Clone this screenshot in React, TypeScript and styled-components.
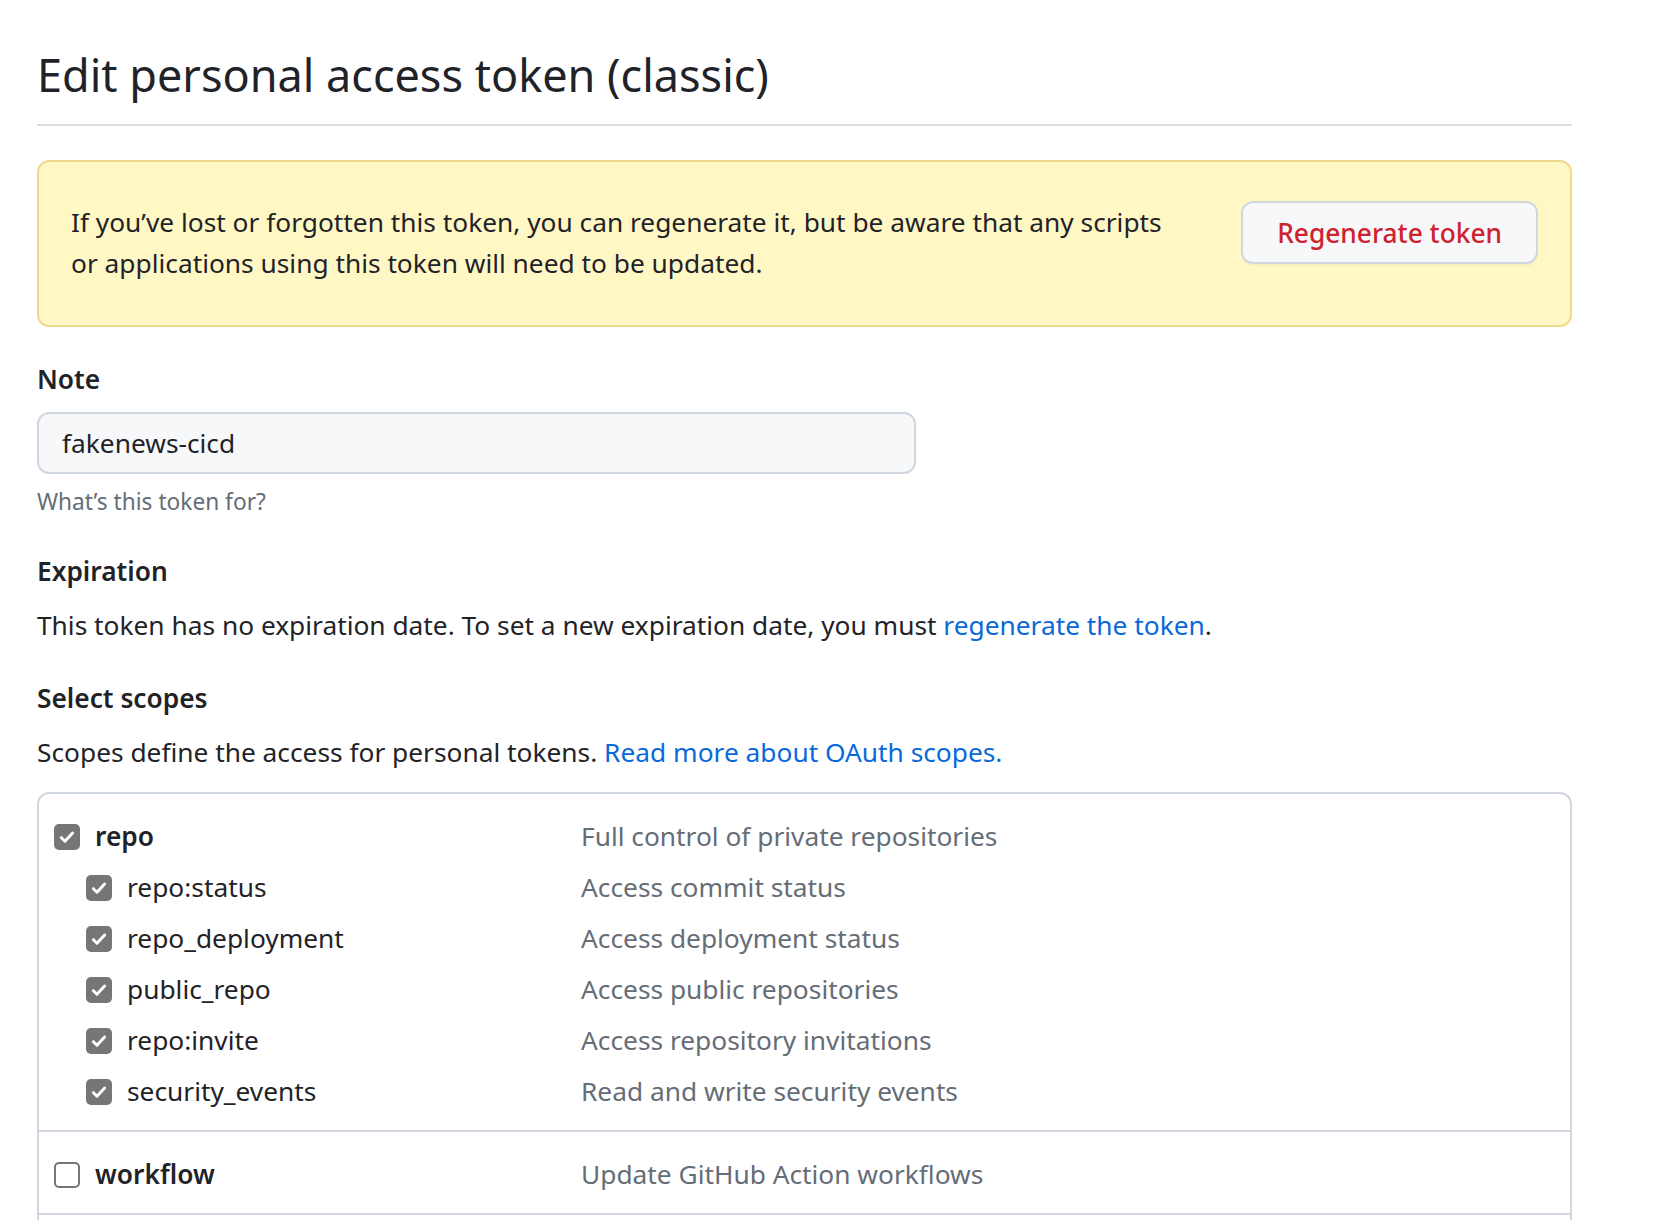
import React from 'react';
import styled, { createGlobalStyle } from 'styled-components';

const GlobalStyle = createGlobalStyle`
    body {
        margin: 0;
        background: #ffffff;
        color: #1f2328;
        font-family: 'Noto Sans', 'Liberation Sans', sans-serif;
        font-size: 26.3px;
        line-height: 41px;
    }
`;

const Page = styled.div`
    width: 1535px;
    padding: 39px 0 0 37px;
`;

const Subhead = styled.h1`
    margin: 0;
    padding-bottom: 13px;
    border-bottom: 2px solid #d8dee4;
    font-size: 45px;
    font-weight: 400;
    line-height: 72px;
`;

const Flash = styled.div`
    display: flex;
    align-items: flex-start;
    justify-content: space-between;
    margin-top: 34px;
    padding: 40px 32px 41px;
    background: #fff8c5;
    border: 2px solid #efd98b;
    border-radius: 12px;
`;

const FlashText = styled.p`
    margin: 0;
    width: 1104px;
`;

const Button = styled.button`
    margin-top: -1px;
    height: 63px;
    padding: 0 34px;
    background: #f6f8fa;
    border: 2px solid #d0d7de;
    border-radius: 12px;
    box-shadow: 0 2px 0 rgba(31, 35, 40, 0.04);
    color: #cf222e;
    font-family: inherit;
    font-size: 26.3px;
    font-weight: 500;
    cursor: pointer;
`;

const Label = styled.div<{ $gap?: number }>`
    margin-top: ${p => p.$gap ?? 30}px;
    font-weight: 600;
`;

const Input = styled.input`
    display: block;
    box-sizing: border-box;
    margin-top: 12px;
    width: 879px;
    height: 62px;
    padding: 0 23px;
    background: #f6f8fa;
    border: 2px solid #d0d7de;
    border-radius: 12px;
    color: #1f2328;
    font-family: inherit;
    font-size: 26.3px;
`;

const Note = styled.div`
    margin-top: 10px;
    color: #656d76;
    font-size: 22.7px;
    line-height: 36px;
`;

const Text = styled.p`
    margin: 13px 0 0;
`;

const Link = styled.a`
    color: #0969da;
    text-decoration: none;
`;

const ScopeBox = styled.div`
    margin-top: 19px;
    border: 2px solid #d0d7de;
    border-bottom: none;
    border-radius: 12px 12px 0 0;
`;

const ScopeGroup = styled.div`
    padding: 17px 0 13px 15px;
    border-bottom: 2px solid #d0d7de;
`;

const ScopeRow = styled.div<{ $child?: boolean }>`
    display: grid;
    grid-template-columns: ${p => (p.$child ? '495px' : '527px')} 1fr;
    align-items: center;
    height: 51px;
    padding-left: ${p => (p.$child ? 32 : 0)}px;
`;

const ScopeName = styled.label<{ $strong?: boolean }>`
    display: flex;
    align-items: center;
    gap: 15px;
    font-weight: ${p => (p.$strong ? 600 : 400)};
`;

const Box = styled.span<{ $checked?: boolean }>`
    box-sizing: border-box;
    display: inline-flex;
    align-items: center;
    justify-content: center;
    width: 26px;
    height: 26px;
    border-radius: 5px;
    background: ${p => (p.$checked ? '#767676' : '#ffffff')};
    border: ${p => (p.$checked ? 'none' : '2px solid #767676')};
`;

const ScopeDesc = styled.span`
    color: #656d76;
`;

function Checkbox({ checked }: { checked?: boolean }) {
    return (
        <Box $checked={checked}>
            {checked && (
                <svg width="18" height="18" viewBox="0 0 16 16">
                    <path
                        d="M3 8.6l3.2 3.2L13 4.4"
                        fill="none"
                        stroke="#ffffff"
                        strokeWidth="2.6"
                        strokeLinecap="round"
                        strokeLinejoin="round"
                    />
                </svg>
            )}
        </Box>
    );
}

const repoChildren = [
    { name: 'repo:status', desc: 'Access commit status' },
    { name: 'repo_deployment', desc: 'Access deployment status' },
    { name: 'public_repo', desc: 'Access public repositories' },
    { name: 'repo:invite', desc: 'Access repository invitations' },
    { name: 'security_events', desc: 'Read and write security events' },
];

export default function App() {
    return (
        <Page>
            <GlobalStyle />
            <Subhead>Edit personal access token (classic)</Subhead>
            <Flash>
                <FlashText>
                    If you’ve lost or forgotten this token, you can regenerate
                    it, but be aware that any scripts or applications using this
                    token will need to be updated.
                </FlashText>
                <Button>Regenerate token</Button>
            </Flash>

            <Label $gap={32}>Note</Label>
            <Input defaultValue="fakenews-cicd" />
            <Note>What’s this token for?</Note>

            <Label $gap={31}>Expiration</Label>
            <Text>
                This token has no expiration date. To set a new expiration
                date, you must <Link href="#">regenerate the token</Link>.
            </Text>

            <Label $gap={32}>Select scopes</Label>
            <Text>
                Scopes define the access for personal tokens.{' '}
                <Link href="#">Read more about OAuth scopes.</Link>
            </Text>

            <ScopeBox>
                <ScopeGroup>
                    <ScopeRow>
                        <ScopeName $strong>
                            <Checkbox checked />
                            repo
                        </ScopeName>
                        <ScopeDesc>Full control of private repositories</ScopeDesc>
                    </ScopeRow>
                    {repoChildren.map(scope => (
                        <ScopeRow $child key={scope.name}>
                            <ScopeName>
                                <Checkbox checked />
                                {scope.name}
                            </ScopeName>
                            <ScopeDesc>{scope.desc}</ScopeDesc>
                        </ScopeRow>
                    ))}
                </ScopeGroup>
                <ScopeGroup>
                    <ScopeRow>
                        <ScopeName $strong>
                            <Checkbox />
                            workflow
                        </ScopeName>
                        <ScopeDesc>Update GitHub Action workflows</ScopeDesc>
                    </ScopeRow>
                </ScopeGroup>
                <ScopeGroup>
                    <ScopeRow />
                </ScopeGroup>
            </ScopeBox>
        </Page>
    );
}
